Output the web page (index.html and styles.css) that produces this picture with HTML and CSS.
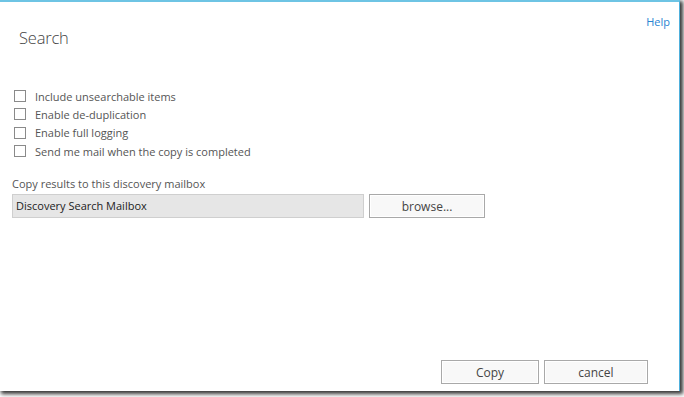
FILE: index.html
```html
<!DOCTYPE html>
<html lang="en">
<head>
  <meta charset="UTF-8">
  <title>Search</title>
  <link rel="stylesheet" href="styles.css">
</head>
<body>
  <div class="dialog">
    <div class="header">
      <h1 class="title">Search</h1>
      <a class="help">Help</a>
    </div>

    <div class="options">
      <label class="option"><span class="box"></span>Include unsearchable items</label>
      <label class="option"><span class="box"></span>Enable de-duplication</label>
      <label class="option"><span class="box"></span>Enable full logging</label>
      <label class="option"><span class="box"></span>Send me mail when the copy is completed</label>
    </div>

    <div class="field">
      <div class="field-label">Copy results to this discovery mailbox</div>
      <div class="field-row">
        <div class="mailbox">Discovery Search Mailbox</div>
        <button class="btn browse">browse...</button>
      </div>
    </div>

    <div class="footer">
      <button class="btn action">Copy</button>
      <button class="btn action">cancel</button>
    </div>
  </div>
</body>
</html>
```

FILE: styles.css
```css
html, body {
  margin: 0;
  height: 100%;
  background: #fff;
  overflow: hidden;
}
body {
  font-family: "Open Sans", "Noto Sans", sans-serif;
  font-size: 11px;
  color: #555;
}
.dialog {
  width: 680px;
  height: 391px;
  box-sizing: border-box;
  background: #fff;
  border-top: 2px solid #6ec4e4;
  border-right: 1px solid #4fb0dc;
  box-shadow: 2px 2px 4px 1px rgba(0, 0, 0, 0.8);
  display: flex;
  flex-direction: column;
  padding: 0 9px 0 12px;
}
.header {
  display: flex;
  justify-content: space-between;
  align-items: flex-start;
}
.title {
  margin: 24px 0 0 7px;
  font-size: 16.5px;
  font-weight: 300;
  letter-spacing: -0.2px;
  color: #444;
}
.help {
  margin-top: 12px;
  font-size: 11px;
  color: #2a84d2;
  cursor: pointer;
}
.options {
  margin-top: 38px;
  padding-left: 2px;
}
.option {
  display: flex;
  align-items: center;
  height: 18.3px;
}
.box {
  width: 10px;
  height: 10px;
  border: 1px solid #8a8a8a;
  background: #fff;
  margin-right: 9px;
}
.field {
  margin-top: 15px;
}
.field-label {
  line-height: 18px;
}
.field-row {
  display: flex;
  gap: 5px;
  margin-top: 1px;
}
.mailbox {
  width: 347px;
  height: 22px;
  line-height: 22px;
  padding-left: 3px;
  background: #e6e6e6;
  border: 1px solid #cfcfcf;
  color: #222;
}
.btn {
  font-family: inherit;
  font-size: 12px;
  color: #444;
  background: #f8f8f8;
  border: 1px solid #a9a9a9;
  box-shadow: inset 0 0 0 1px #fff;
  padding: 0;
  cursor: pointer;
}
.browse {
  width: 116px;
  height: 24px;
}
.footer {
  margin-top: auto;
  margin-bottom: 7px;
  padding-right: 22px;
  display: flex;
  justify-content: flex-end;
  gap: 5px;
}
.action {
  width: 98px;
  height: 24px;
}
.action + .action {
  width: 104px;
}
```
